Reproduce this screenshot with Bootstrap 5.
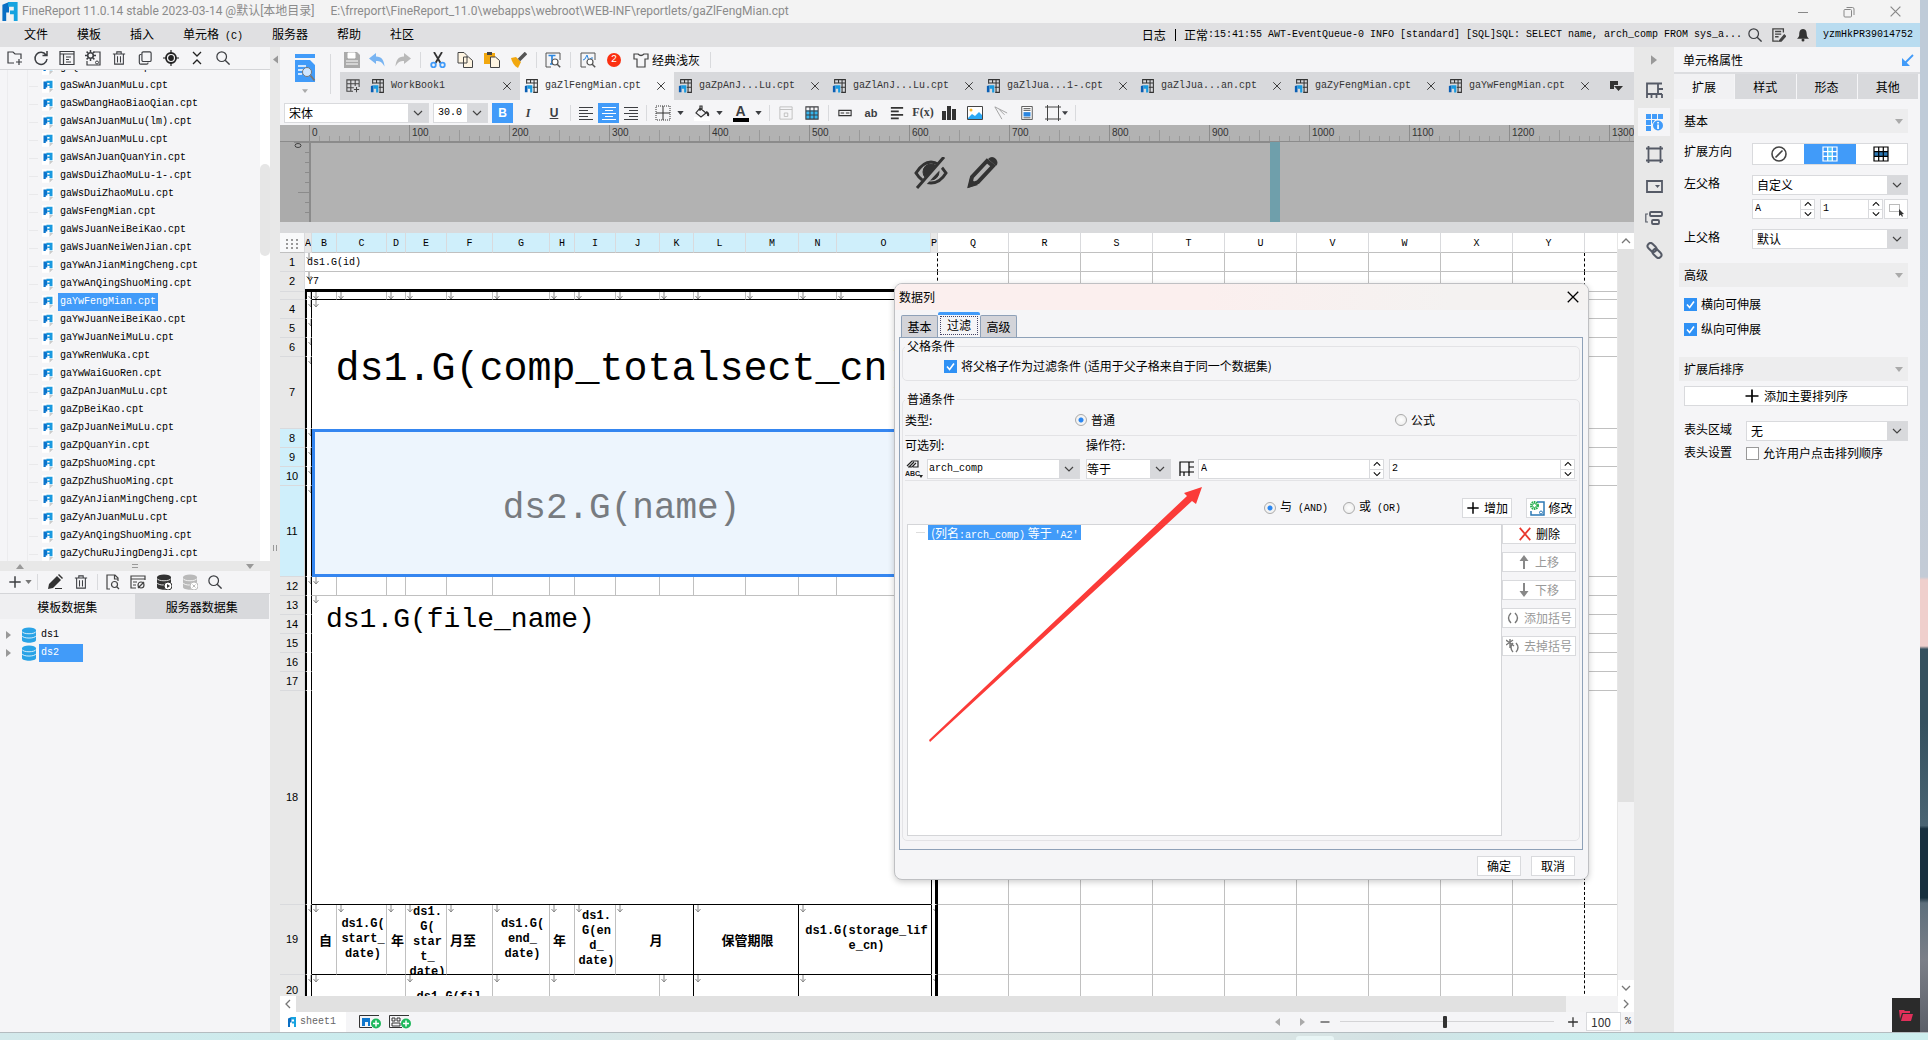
<!DOCTYPE html>
<html lang="zh-CN">
<head>
<meta charset="utf-8">
<meta name="viewport" content="width=device-width, initial-scale=1">
<title>FineReport Designer</title>
<link href="https://cdn.jsdelivr.net/npm/bootstrap@5.3.0/dist/css/bootstrap.min.css" rel="stylesheet">
<style>
:root{--blue:#419bf9;--panel:#f5f5f7;--bar:#e0e0e2;--strip:#e8e8e8;--line:#d9dadd;--tab:#d8d9dc;--mono:"Liberation Mono","Noto Sans CJK SC",monospace;
--chev:url("data:image/svg+xml,%3Csvg xmlns='http://www.w3.org/2000/svg' width='10' height='10'%3E%3Cpath d='M1 3l4 4 4-4' fill='none' stroke='%23444' stroke-width='1.2'/%3E%3C/svg%3E");
--mark:url("data:image/svg+xml,%3Csvg xmlns='http://www.w3.org/2000/svg' width='6' height='8'%3E%3Cpath d='M3 0v7M.5 4L3 7l2.5-3' fill='none' stroke='%23888'/%3E%3C/svg%3E")}
body{font:12px/18px "Noto Sans CJK SC",sans-serif;color:#000;background:var(--panel);overflow:hidden}
svg{display:block;flex:none}
use{fill:none;stroke:currentColor}
button,input,select{font:inherit;color:inherit;border-radius:0}
button{background:none;border:0;padding:0}
.lat{font:10px/18px var(--mono)}
.i16{width:16px;height:16px}.i14{width:14px;height:14px}.i18{width:18px;height:18px}
.icell{display:flex;align-items:center;justify-content:center;width:26px;height:22px;flex:none;color:#3c3e42}
.vsep{flex:none;width:1px;height:16px;margin:0 3px;background:#d9dadd}
.titlebar{height:23px;background:#f3f3f3;color:#8b8b8b;font:12px/23px Roboto,"Noto Sans CJK SC",sans-serif}
.menubar{height:24px;background:var(--bar)}
.menubar a{color:#000;text-decoration:none;margin-right:29px}
.userbox{background:#b9dcf0;padding:0 7px;height:24px;line-height:24px}
.leftpane{width:270px;background:var(--panel);flex:none}
.toolrow{height:23px;border-bottom:1px solid #d4d5d8}
.files{height:491px;overflow:hidden}
.files ul{margin-top:-11px;padding-left:42px;background:linear-gradient(#ececee,#ececee) 7px 0/1px 100% no-repeat,linear-gradient(#ececee,#ececee) 27px 0/1px 100% no-repeat}
.files li{height:18px;display:flex;align-items:center;gap:4px}
.files li::before{content:"";width:9px;height:1px;background:#e9e9eb;margin-left:-13px}
.files li a,.dsets a{color:#000;text-decoration:none;padding:0 2px}
.files .pick,.dsets .pick{background:var(--blue);color:#fff}
.fscroll{width:10px;background:#fff}.fscroll i{display:block;height:92px;margin-top:94px;border-radius:5px;background:#e6e6e6}
.hsplit{height:10px;background:var(--strip);color:#999;padding:0 15px}
.dtabs{height:25px;line-height:25px}
.dtabs button{flex:1;text-align:center;background:#efeff1}.dtabs button+button{background:var(--tab);margin-right:1px}
.vsplit{width:10px;background:var(--strip);flex:none;position:relative;color:#999}
.doctabs{height:28px;background:var(--tab)}
.doctabs .dt{flex:0 1 154px;height:28px;display:flex;align-items:center;padding:0 8px 0 4px;gap:7px;color:#333}
.doctabs .dt.on{background:var(--panel)}
.fmt{height:26px}
.combo{appearance:none;border:1px solid var(--line);height:20px;line-height:18px;padding:0 4px;background:var(--chev) right 5px center no-repeat,linear-gradient(var(--tab),var(--tab)) right 0 top 0/20px 100% no-repeat,#fff;outline:0;min-width:0}
.onb{background:var(--blue);color:#fff}
.ruler{height:17px;background:#b2b2b2;border-bottom:1px solid #8b8b8b;padding-left:29px;overflow:hidden}
.ruler span{flex:0 0 100px;height:16px;padding-left:2px;border-left:1px solid #8d8d8d;font:10px/15px "Liberation Sans",sans-serif;color:#333;background:linear-gradient(#999,#999) 49px 5px/1px 11px no-repeat,repeating-linear-gradient(90deg,transparent 0 9px,#999 9px 10px) 0 11px/100% 5px no-repeat}
.stage{height:80px;background:#b2b2b2}
.stage .tealbar{width:10px;background:#6f9fab}
.gridwrap{overflow:hidden;background:#fff;min-height:0}
.sheet{table-layout:fixed;width:100%;border-collapse:separate;border-spacing:0;line-height:14px}
.sheet td,.sheet th{padding:0;height:19px;border-right:1px solid #c0c0c0;border-bottom:1px solid #c0c0c0;overflow:hidden;vertical-align:middle;white-space:nowrap;font-weight:400;text-align:center}
.sheet thead th{height:20px;padding-top:3px;font:10px/14px var(--mono);background:#fff;border-right-color:#d9dadd}
.sheet thead .s,.sheet tbody th.s{background:#cfeffb}
.sheet tbody th,.sheet thead .g{background:var(--strip);border-color:#d9dadd}
.sheet tbody th{font:11px/14px "Liberation Sans",sans-serif}
.sheet td.m{background:var(--mark) 1px 0 no-repeat}
.sheet td.a{border-left:2px solid #000;border-right:1px solid #000;border-bottom-color:#fff}
.sheet td.p{border-left:1px solid #000;border-right:3px solid #000;border-bottom-color:#fff}
.sheet td.kb{border-bottom:1px solid #000}.sheet td.kr{border-right:1px solid #000}
.sheet td.kt{border-bottom:3px solid #000}
.sheet td.dash{border-right:1px dashed #000}
.sheet td.first{font:10px/14px var(--mono);text-align:left;padding:3px 0 0 2px}
.sheet td:last-child,.sheet th:last-child{border-right:0}
.sheet .r3 td,.sheet .r3 th{height:8px;line-height:6px}
.sheet .r7 th,.sheet .r7 td{height:72px}.sheet .r11 th,.sheet .r11 td{height:91px}.sheet .r18 th{height:214px}.sheet .r19 th{height:70px}.sheet .r20 th{height:40px}
.sheet .r19 td,.sheet .r20 td{font:bold 12px/15px var(--mono)}
.sheet .r19 td{padding-left:3px}.sheet .r19 td.a,.sheet .r19 td.p{padding-left:0}
.sheet .r19 td.zh{font:bold 13px/15px "Noto Sans CJK SC",sans-serif}
.clip{height:69px;overflow:hidden}
.sheet .big40{font:40px/44px var(--mono);padding:12px 0 0 4px}.sheet .big36{font:36px/44px var(--mono);color:#777b80;padding-top:12px}.sheet .big28{font:28px/44px var(--mono);padding:2px 0 0 14px}
.sheet td.picked{border:3px solid #3586f0;background:#edf5fd}
.vbar{width:17px;background:#f3f3f4;border-left:1px solid #e6e6e6;flex:none}
.vbar button,.hbar button{width:16px;height:16px;background:#fff;display:flex;align-items:center;justify-content:center;color:#777}
.vbar i{display:block;background:#e1e1e1;flex:0 1 553px}
.hbar{height:16px;background:#f3f3f4}.hbar i{background:#e1e1e1;height:16px;margin-right:52px}
.sheetbar{height:21px;background:var(--panel)}
.sheetbar .st{width:66px;height:20px;background:#fff;color:#666}
.zoomr{appearance:none;width:214px;height:14px;background:linear-gradient(#d4d4d6,#d4d4d6) center/100% 1px no-repeat;margin:0 9px}
.zoomr::-webkit-slider-thumb{appearance:none;width:4px;height:12px;background:#333;border-radius:1px}
.rail{width:40px;background:var(--strip);flex:none}
.rail button{width:32px;height:28px;display:flex;align-items:center;justify-content:center;color:#555a66;margin-bottom:4px}
.rail button.on{background:var(--panel);color:var(--blue)}
.props{width:246px;flex:none;background:var(--panel)}
.props .ph{height:27px;border-bottom:2px solid #dcdde0;padding:0 6px 0 9px}
.ptabs{height:25px;line-height:25px;padding-right:2px;gap:1px}.ptabs button{flex:1;background:var(--tab)}.ptabs button.on{background:#f1f1f3}
.sec{height:24px;background:#ededee;margin:0 12px 0 5px;padding:0 5px;color:#000}
.prow{display:flex;padding:0 12px 0 10px}
.prow>.lb{width:68px;flex:none;line-height:16px}
.seg{border:1px solid var(--line);height:22px;background:#fff}.seg button{flex:1;display:flex;align-items:center;justify-content:center}
.spin{display:flex;border:1px solid var(--line);background:#fff;height:20px;min-width:0}
.spin input{border:0;width:0;flex:1;padding:0 2px;font:10px/16px var(--mono);outline:0;background:#fff}
.spin span{width:14px;border-left:1px solid var(--line);display:flex;flex-direction:column;flex:none}
.spin span button{flex:1;display:flex;align-items:center;justify-content:center}.spin span button+button{border-top:1px solid var(--line)}
.tick{appearance:none;width:13px;height:13px;border:1px solid #999;background:#fff;margin:0;flex:none}
.tick:checked{border:0;background:url("data:image/svg+xml,%3Csvg xmlns='http://www.w3.org/2000/svg' width='13' height='13'%3E%3Cpath d='M3 6.5l2.6 3L10 3.5' fill='none' stroke='%23fff' stroke-width='1.6'/%3E%3C/svg%3E") center no-repeat #2f91f5}
.rad{appearance:none;width:12px;height:12px;border:1px solid #aaa;border-radius:50%;margin:0;background:radial-gradient(#fff,#e8e8e8);flex:none}
.rad:checked{background:radial-gradient(circle,#2b86f0 0 2px,#f3f3f3 3px)}
.wbtn{background:#fff;border:1px solid var(--line);height:20px;display:flex;align-items:center;justify-content:center;gap:4px;line-height:16px;white-space:nowrap}
.wbtn:disabled{color:#999}
.desk{width:8px;flex:none;background:linear-gradient(#bfcbd8 0 20%,#c3cbd6 55.9%,#efcfcc 56.2% 62.6%,#35515f 62.9% 70%,#4a6473 80%,#17303f 80.3% 87%,#5d6f7c 87.5%,#7b7f88 93%,#5b5f68)}
.taskbar{height:8px;flex:none;border-top:1px solid #b4bcc0;background:linear-gradient(90deg,#d3e9eb,#c9ecee 22%,#dbe5e5 35%,#dde6e4 62%,#d3e2e4 72%,#c9ebec 80%,#cdeeee)}
.taskbar i{display:block;width:38px;height:5px;margin-left:67.2%;margin-top:3px;background:#e8f5f5;border-radius:3px 3px 0 0}
.floatbox{position:absolute;right:8px;bottom:8px;width:28px;height:34px;background:#2b2b2b;color:#e0305a;display:flex;align-items:center;justify-content:center}
.dlg{position:absolute;left:894px;top:283px;width:695px;background:var(--panel);border:1px solid #bfc0c3;border-radius:8px;box-shadow:0 2px 6px #0003;overflow:hidden}
.dlg .dh{height:26px;background:linear-gradient(90deg,#fbefee 0 45%,#f4f2f1 80%);padding:0 8px 0 4px}
.dlgtabs{padding:3px 0 0 6px;height:27px;align-items:flex-end}
.dlgtabs button{width:37px;height:22px;line-height:22px;background:#d3d4d9;border:1px solid #8ea1b8;border-bottom:0;border-radius:2px 2px 0 0}
.dlgtabs button.on{width:42px;height:25px;line-height:16px;border:1px solid #8ea1b8;border-width:3px 0 0;border-color:var(--blue);background:var(--panel);padding:1px 2px 3px}
.dlgtabs .on span{display:block;border:1px dotted #446;height:19px}
.pane{margin:0 5px 0 4px;border:1px solid #8ea1b8;padding:0 2px 8px}
.fs{border:1px solid #e3e3e6;border-radius:5px;padding:0 2px;margin:0}
.fs legend{float:none;width:auto;font-size:12px;line-height:16px;padding:0 2px;margin:0}
.rule{border-top:1px solid #e3e3e6}
.conds{height:312px;background:#fff;border:1px solid #d4d5d8;padding:0 0 0 8px}
.conds .pick{background:var(--blue);color:#fff;padding:0 3px;height:15px;line-height:15px;margin-left:3px}
.side{width:74px}.side .wbtn{width:74px;margin-bottom:8px}
.redarrow{position:absolute;left:925px;top:484px;pointer-events:none}
</style>
<script src="https://cdn.jsdelivr.net/npm/bootstrap@5.3.0/dist/js/bootstrap.bundle.min.js"></script>
</head>
<body class="vh-100 d-flex flex-column">
<svg width="0" height="0" class="position-absolute">
<symbol id="x" viewBox="0 0 16 16"><path d="M2 2l12 12M14 2L2 14" stroke-width="1.500"/></symbol>
<symbol id="search" viewBox="0 0 16 16"><circle cx="6.500" cy="6.500" r="5.500" stroke-width="1.400"/><path d="M10.500 10.500L15.500 15.500" stroke-width="1.600"/></symbol>
<symbol id="cpt" viewBox="0 0 16 18"><path d="M0 0h16v12l-5 6H0z" fill="#fff" stroke="none"/><path d="M10 18v-5h5z" fill="#c9c9c9" stroke="none"/><path d="M2 3h5v8H5v2H2z" fill="#0a74cc" stroke="none"/><path d="M6 2h8v10h-4V9H7V7h3V5H6z" fill="#1a9ae0" stroke="none"/></symbol>
<symbol id="logo" viewBox="0 0 16 20"><path d="M0 3l7-3v11H4v9H0z" fill="#0b6fc4" stroke="none"/><path d="M6 0h10v20h-4v-7H8V9h4V5H6z" fill="#16a3e0" stroke="none"/></symbol>
<symbol id="wb" viewBox="0 0 16 16"><path d="M3 5.500V.7h12.300v14.600H10.500M3 4.500h12M7.500 1v4M11.500 1v14M10 9.500h5" stroke="#333" stroke-width="1.200"/><path d="M1 8l3-1v8H1z" fill="#0a5fb4" stroke="none"/><path d="M4 7h5.500v8.500H7V11H4z" fill="#1a9ae0" stroke="none"/></symbol>
<symbol id="db" viewBox="0 0 16 16"><path d="M1 3v10c0 3.600 14 3.600 14 0V3" fill="currentColor" stroke="none"/><ellipse cx="8" cy="3.200" rx="7" ry="2.800" fill="currentColor" stroke="none"/><path d="M1 4.500c1 3 13 3 14 0M1 8.800c1 3 13 3 14 0" stroke="#fff" stroke-width=".8"/></symbol>
<symbol id="trash" viewBox="0 0 16 16"><path d="M1 3.500h14M5.500 3V1h5v2M3 4v11h10V4M6.300 6v7M9.700 6v7" stroke-width="1.200"/></symbol>
<symbol id="copy" viewBox="0 0 16 16"><rect x="4.500" y="1" width="10.500" height="11" rx="1.500" stroke-width="1.300"/><path d="M4 4H3Q1.500 4 1.500 5.500V13Q1.500 15 3 15h7q1.500 0 1.500-2" stroke-width="1.300"/></symbol>
<symbol id="up" viewBox="0 0 10 10"><path d="M1 7l4-4 4 4" stroke-width="1.300"/></symbol>
<symbol id="dn" viewBox="0 0 10 10"><path d="M1 3l4 4 4-4" stroke-width="1.300"/></symbol>
<symbol id="lf" viewBox="0 0 10 10"><path d="M7 1L3 5l4 4" stroke-width="1.300"/></symbol>
<symbol id="rt" viewBox="0 0 10 10"><path d="M3 1l4 4-4 4" stroke-width="1.300"/></symbol>
<symbol id="tri" viewBox="0 0 8 5"><path d="M0 0h8L4 5z" fill="currentColor" stroke="none"/></symbol>
<symbol id="triu" viewBox="0 0 8 5"><path d="M0 5h8L4 0z" fill="currentColor" stroke="none"/></symbol>
<symbol id="trir" viewBox="0 0 5 8"><path d="M0 0v8l5-4z" fill="currentColor" stroke="none"/></symbol>
<symbol id="tril" viewBox="0 0 5 8"><path d="M5 0v8L0 4z" fill="currentColor" stroke="none"/></symbol>
<symbol id="plus" viewBox="0 0 16 16"><path d="M8 1.500v13M1.500 8h13" stroke-width="1.700"/></symbol>
<symbol id="minus" viewBox="0 0 16 16"><path d="M2 8h12" stroke-width="1.500"/></symbol>
<symbol id="al" viewBox="0 0 16 16"><path d="M1 2.500h14M1 5.500h9M1 8.500h14M1 11.500h9M1 14.500h14"/></symbol>
<symbol id="ac" viewBox="0 0 16 16"><path d="M1 2.500h14M4 5.500h8M1 8.500h14M4 11.500h8M1 14.500h14"/></symbol>
<symbol id="ar" viewBox="0 0 16 16"><path d="M1 2.500h14M6 5.500h9M1 8.500h14M6 11.500h9M1 14.500h14"/></symbol>
<symbol id="gear" viewBox="0 0 16 16"><path d="M9 2h6v13H2V11" stroke-width="1.200"/><circle cx="5.500" cy="5.500" r="2.800" stroke-width="1.600"/><path d="M5.500 0v2M5.500 9v2M0 5.500h2M9 5.500h2M1.600 1.600L3 3M8 8l1.400 1.400M9.400 1.600L8 3M3 8L1.600 9.400" stroke-width="1.500"/><circle cx="12" cy="12.500" r="1.500"/></symbol>
<symbol id="cells" viewBox="0 0 16 16"><path d="M1 11V1h14M1 11h14M10 1v14M10 6h5M5 11v4M1 11v4" stroke-width="1.200"/></symbol>
<symbol id="grid" viewBox="0 0 16 16"><path d="M1 1h14v14H1zM1 5.700h14M1 10.300h14M5.700 1v14M10.300 1v14" stroke-width="1.200"/></symbol>
<symbol id="mag" viewBox="0 0 16 16"><circle cx="10" cy="10" r="3" stroke="#555" fill="#fff" stroke-width="1.200"/><path d="M12.200 12.200l3 3" stroke="#555" stroke-width="1.500"/></symbol>
</svg>

<div class="d-flex flex-fill" style="min-height:0">
<div class="d-flex flex-column flex-fill" style="min-width:0">

<header class="titlebar d-flex align-items-center">
 <svg width="16" height="19" style="margin-left:2px"><use href="#logo"/></svg>
 <span class="ms-1">FineReport 11.0.14 stable 2023-03-14 @默认[本地目录]</span><span class="ms-3">E:\frreport\FineReport_11.0\webapps\webroot\WEB-INF\reportlets/gaZlFengMian.cpt</span>
 <div class="ms-auto d-flex align-items-center" style="gap:34px;padding-right:18px">
  <button aria-label="最小化"><svg width="12" height="12" viewBox="0 0 12 12" stroke="#888"><path d="M1 6.500h10"/></svg></button>
  <button aria-label="还原"><svg width="12" height="12" viewBox="0 0 12 12" fill="none" stroke="#888"><rect x="1" y="3.500" width="7.500" height="7.500" rx="1"/><path d="M3.500 1.500h6Q11 1.500 11 3v6"/></svg></button>
  <button aria-label="关闭" style="color:#888"><svg width="13" height="13"><use href="#x"/></svg></button>
 </div>
</header>

<nav class="menubar d-flex align-items-center">
 <div class="d-flex ps-4"><a href="#">文件</a><a href="#">模板</a><a href="#">插入</a><a href="#">单元格<span class="lat"> (C)</span></a><a href="#">服务器</a><a href="#">帮助</a><a href="#">社区</a></div>
 <div class="ms-auto d-flex align-items-center"><span>日志</span><span style="width:1px;height:12px;background:#000;margin:0 8px 0 9px"></span><span>正常</span><span class="lat" style="white-space:pre">:15:41:55 AWT-EventQueue-0 INFO [standard] [SQL]SQL: SELECT name, arch_comp FROM sys_a...</span>
  <button class="icell" aria-label="搜索"><svg class="i14"><use href="#search"/></svg></button>
  <button class="icell" style="width:22px" aria-label="反馈"><svg class="i14" viewBox="0 0 16 16" fill="none" stroke="#444" stroke-width="1.500"><path d="M13 5V1H1v14h6M3.500 4h7M3.500 7h7M3.500 10h4"/><path d="M8 15l6-7 1.500 1.500-5 5.500z" fill="#444"/></svg></button>
  <button class="icell" aria-label="通知"><svg width="12" height="14" viewBox="0 0 16 18" fill="#333"><path d="M8 1c4 0 5 4 5 7s1 4 3 6H0c2-2 3-3 3-6s1-7 5-7z"/><circle cx="8" cy="15.500" r="2"/></svg></button>
  <a href="#" class="userbox lat m-0">yzmHkPR39014752</a></div>
</nav>

<div class="d-flex flex-fill" style="min-height:0">

<aside class="leftpane d-flex flex-column">
 <div class="toolrow d-flex align-items-center" style="padding-left:2px">
  <button class="icell" aria-label="新建文件夹"><svg class="i16" viewBox="0 0 16 16" fill="none" stroke="currentColor" stroke-width="1.200"><path d="M7 13H1V2h5l2 2h6v5M12 9v6M9 12h6"/></svg></button>
  <button class="icell" aria-label="刷新"><svg class="i16" viewBox="0 0 16 16" fill="none" stroke="currentColor" stroke-width="1.500"><path d="M13 5A6 6 0 1 0 14 9M14 1v4.500H9.500"/></svg></button>
  <button class="icell" aria-label="定位"><svg class="i16" viewBox="0 0 16 16" fill="none" stroke="currentColor" stroke-width="1.200"><path d="M1 1.500h14v13H1zM1 4h14M4.500 4v10M7 7h5M7 9.500h3M7 12h5"/></svg></button>
  <button class="icell" aria-label="设置"><svg class="i16"><use href="#gear"/></svg></button>
  <button class="icell" aria-label="删除"><svg class="i14"><use href="#trash"/></svg></button>
  <button class="icell" aria-label="复制"><svg class="i14"><use href="#copy"/></svg></button>
  <button class="icell" aria-label="目标"><svg class="i16" viewBox="0 0 16 16" fill="none" stroke="#222" stroke-width="1.800"><circle cx="8" cy="8" r="5"/><circle cx="8" cy="8" r="2" fill="#222"/><path d="M8 0v3M8 13v3M0 8h3M13 8h3" stroke-width="1.200"/></svg></button>
  <button class="icell" aria-label="折叠"><svg width="12" height="14" viewBox="0 0 12 14" fill="none" stroke="#222" stroke-width="1.300"><path d="M2 1l4 4 4-4M2 13l4-4 4 4"/></svg></button>
  <button class="icell" aria-label="查找"><svg class="i14"><use href="#search"/></svg></button>
 </div>
 <div class="files d-flex"><ul class="list-unstyled flex-fill lat mb-0">
 <li><svg width="12" height="14"><use href="#cpt"/></svg><a href="#">gaQtJuanMuLu.cpt</a></li>
 <li><svg width="12" height="14"><use href="#cpt"/></svg><a href="#">gaSwAnJuanMuLu.cpt</a></li>
 <li><svg width="12" height="14"><use href="#cpt"/></svg><a href="#">gaSwDangHaoBiaoQian.cpt</a></li>
 <li><svg width="12" height="14"><use href="#cpt"/></svg><a href="#">gaWsAnJuanMuLu(lm).cpt</a></li>
 <li><svg width="12" height="14"><use href="#cpt"/></svg><a href="#">gaWsAnJuanMuLu.cpt</a></li>
 <li><svg width="12" height="14"><use href="#cpt"/></svg><a href="#">gaWsAnJuanQuanYin.cpt</a></li>
 <li><svg width="12" height="14"><use href="#cpt"/></svg><a href="#">gaWsDuiZhaoMuLu-1-.cpt</a></li>
 <li><svg width="12" height="14"><use href="#cpt"/></svg><a href="#">gaWsDuiZhaoMuLu.cpt</a></li>
 <li><svg width="12" height="14"><use href="#cpt"/></svg><a href="#">gaWsFengMian.cpt</a></li>
 <li><svg width="12" height="14"><use href="#cpt"/></svg><a href="#">gaWsJuanNeiBeiKao.cpt</a></li>
 <li><svg width="12" height="14"><use href="#cpt"/></svg><a href="#">gaWsJuanNeiWenJian.cpt</a></li>
 <li><svg width="12" height="14"><use href="#cpt"/></svg><a href="#">gaYwAnJianMingCheng.cpt</a></li>
 <li><svg width="12" height="14"><use href="#cpt"/></svg><a href="#">gaYwAnQingShuoMing.cpt</a></li>
 <li><svg width="12" height="14"><use href="#cpt"/></svg><a href="#" class="pick">gaYwFengMian.cpt</a></li>
 <li><svg width="12" height="14"><use href="#cpt"/></svg><a href="#">gaYwJuanNeiBeiKao.cpt</a></li>
 <li><svg width="12" height="14"><use href="#cpt"/></svg><a href="#">gaYwJuanNeiMuLu.cpt</a></li>
 <li><svg width="12" height="14"><use href="#cpt"/></svg><a href="#">gaYwRenWuKa.cpt</a></li>
 <li><svg width="12" height="14"><use href="#cpt"/></svg><a href="#">gaYwWaiGuoRen.cpt</a></li>
 <li><svg width="12" height="14"><use href="#cpt"/></svg><a href="#">gaZpAnJuanMuLu.cpt</a></li>
 <li><svg width="12" height="14"><use href="#cpt"/></svg><a href="#">gaZpBeiKao.cpt</a></li>
 <li><svg width="12" height="14"><use href="#cpt"/></svg><a href="#">gaZpJuanNeiMuLu.cpt</a></li>
 <li><svg width="12" height="14"><use href="#cpt"/></svg><a href="#">gaZpQuanYin.cpt</a></li>
 <li><svg width="12" height="14"><use href="#cpt"/></svg><a href="#">gaZpShuoMing.cpt</a></li>
 <li><svg width="12" height="14"><use href="#cpt"/></svg><a href="#">gaZpZhuShuoMing.cpt</a></li>
 <li><svg width="12" height="14"><use href="#cpt"/></svg><a href="#">gaZyAnJianMingCheng.cpt</a></li>
 <li><svg width="12" height="14"><use href="#cpt"/></svg><a href="#">gaZyAnJuanMuLu.cpt</a></li>
 <li><svg width="12" height="14"><use href="#cpt"/></svg><a href="#">gaZyAnQingShuoMing.cpt</a></li>
 <li><svg width="12" height="14"><use href="#cpt"/></svg><a href="#">gaZyChuRuJingDengJi.cpt</a></li>
 </ul><div class="fscroll"><i></i></div></div>
 <div class="hsplit d-flex align-items-center justify-content-between"><svg width="10" height="5"><use href="#triu"/></svg><svg width="6" height="4" stroke="#999"><path d="M0 .5h6M0 3.500h6"/></svg><svg width="10" height="5"><use href="#tri"/></svg></div>
 <div class="toolrow d-flex align-items-center" style="padding-left:7px">
  <button class="icell" style="gap:3px" aria-label="新增"><svg class="i14"><use href="#plus"/></svg><svg width="7" height="4" style="color:#777"><use href="#tri"/></svg></button><span class="vsep mx-1"></span>
  <button class="icell" aria-label="编辑"><svg class="i16" viewBox="0 0 16 16" fill="#333"><path d="M1 15l1-5 8-8 4 4-8 8zM11 1l1-1 4 4-1 1zM8 14h7v1H8z"/></svg></button>
  <button class="icell" aria-label="删除"><svg class="i14"><use href="#trash"/></svg></button><span class="vsep"></span>
  <button class="icell" aria-label="预览" style="width:24px"><svg class="i16" viewBox="0 0 16 16" fill="none" stroke="#444" stroke-width="1.200"><path d="M5 15H2V1h8l3 3v3M9.500 1v4H13"/><circle cx="9.500" cy="10.500" r="3"/><path d="M12 13l2 2"/></svg></button>
  <button class="icell" aria-label="连接"><svg class="i16" viewBox="0 0 16 16" fill="none" stroke="#444" stroke-width="1.200"><path d="M6 14H1V2h14v4M1 5h14M3 8h4M3 11h3"/><circle cx="11" cy="11" r="3"/><path d="M8 14l6-6"/></svg></button>
  <button class="icell" aria-label="数据源" style="color:#333"><svg class="i16" viewBox="0 0 16 16"><use href="#db"/><circle cx="12" cy="12" r="4" fill="#fff" stroke="#333"/><path d="M11 10v4l3-2z" fill="#333"/></svg></button>
  <button class="icell" aria-label="停用" style="color:#b9b9b9"><svg class="i16" viewBox="0 0 16 16"><use href="#db"/><circle cx="12" cy="12" r="4" fill="#fff" stroke="#bbb"/><path d="M10.500 10.500l3 3M13.500 10.500l-3 3" stroke="#bbb"/></svg></button>
  <button class="icell" aria-label="查找" style="width:24px"><svg class="i14"><use href="#search"/></svg></button>
 </div>
 <div class="dtabs d-flex"><button>模板数据集</button><button>服务器数据集</button></div>
 <ul class="dsets list-unstyled lat mb-0" style="padding:7px 0 0 6px">
  <li class="d-flex align-items-center"><svg width="5" height="8" style="color:#999;margin-right:10px"><use href="#trir"/></svg><svg class="i16" style="color:#2aa3e6;margin-right:2px"><use href="#db"/></svg><a href="#">ds1</a></li>
  <li class="d-flex align-items-center"><svg width="5" height="8" style="color:#999;margin-right:10px"><use href="#trir"/></svg><svg class="i16" style="color:#2aa3e6;margin-right:2px"><use href="#db"/></svg><a href="#" class="pick pe-4">ds2</a></li>
 </ul>
</aside>

<div class="vsplit d-flex flex-column align-items-center justify-content-between"><svg width="5" height="9" style="margin-top:8px"><use href="#tril"/></svg><svg width="4" height="6" stroke="#999"><path d="M.5 0v6M3.500 0v6"/></svg><span></span></div>

<main class="d-flex flex-column flex-fill" style="min-width:0">
 <div class="d-flex">
  <div class="d-flex align-items-center" style="width:60px;padding-left:14px">
   <button class="d-flex flex-column align-items-center" aria-label="预览模板" style="gap:7px"><svg width="22" height="28" viewBox="0 0 22 28"><path d="M1 0h20v4H1zM1 6h15l5 5v17H1z" fill="#419bf9"/><path d="M4 12h8M4 16h5M4 20h4" stroke="#fff" stroke-width="1.500"/><circle cx="13" cy="18" r="4.500" fill="#cfe6ff" stroke="#777"/><path d="M16.500 21.500l4 5" stroke="#777" stroke-width="2"/></svg><svg width="6" height="4" style="color:#aaa"><use href="#tri"/></svg></button>
   <span style="width:1px;height:40px;background:#d9dadd;margin-left:14px"></span>
  </div>
  <div class="flex-fill" style="min-width:0">
   <div class="d-flex align-items-center" style="height:25px">
    <button class="icell" style="width:24px" aria-label="保存"><svg class="i16" viewBox="0 0 16 16"><path d="M0 0h13l3 3v13H0z" fill="#aaa"/><path d="M4 1h7v5H4zM2 9h12M2 12h12" fill="#fff" stroke="#fff"/></svg></button>
    <button class="icell" aria-label="撤销"><svg class="i16" viewBox="0 0 16 16"><path d="M0 6.500L7 1v3.500c6 0 8 4 8.500 10C13 10 11 9 7 9v3z" fill="#78b4f2"/></svg></button>
    <button class="icell" aria-label="重做"><svg class="i16" viewBox="0 0 16 16"><path d="M16 6.500L9 1v3.500c-6 0-8 4-8.500 10C3 10 5 9 9 9v3z" fill="#b9b9b9"/></svg></button><span class="vsep mx-1"></span>
    <button class="icell" aria-label="剪切"><svg class="i16" viewBox="0 0 16 16" fill="none" stroke-width="1.800"><path d="M4 0l6.500 11M12 0L5.500 11" stroke="#333"/><circle cx="3.500" cy="13" r="2.300" stroke="#419bf9"/><circle cx="12.500" cy="13" r="2.300" stroke="#419bf9"/></svg></button>
    <button class="icell" style="width:28px" aria-label="复制"><svg class="i16" viewBox="0 0 16 16" fill="#fff5e2" stroke="#444"><path d="M1 .5h6l3 3V11H1zM6.500 5h5l4 3.500v7h-9z"/></svg></button>
    <button class="icell" aria-label="粘贴"><svg class="i16" viewBox="0 0 16 16"><path d="M0 1h11v11H0z" fill="#f2a80f"/><path d="M3 0h5v3H3z" fill="#444"/><path d="M6.500 5h5l4 3.500v7h-9z" fill="#fff5e2" stroke="#444"/></svg></button>
    <button class="icell" style="width:28px" aria-label="格式刷"><svg class="i16" viewBox="0 0 16 16"><path d="M0 6l5-1 5 5-3 6C3 14 1 10 0 6z" fill="#f2a80f"/><path d="M8 8l7-7" stroke="#555" stroke-width="3.500"/></svg></button><span class="vsep"></span>
    <button class="icell" aria-label="文本"><svg class="i16" viewBox="0 0 16 16"><path d="M6 15H1V1h14v7" fill="none" stroke="#555"/><path d="M3.500 3.500h7M7 3.500v9M5 12h4" stroke="#2b86e0" stroke-width="1.700"/><use href="#mag"/></svg></button><span class="vsep mx-1"></span>
    <button class="icell" aria-label="监控"><svg class="i16" viewBox="0 0 16 16"><path d="M6 15H1V1h14v7" fill="none" stroke="#555"/><path d="M3 8l2-1 2-4 2 6 2-3h2" fill="none" stroke="#2b86e0"/><use href="#mag"/></svg></button>
    <span class="icell"><b class="rounded-circle text-white text-center lat" style="width:14px;height:14px;line-height:14px;background:#fb3011">2</b></span>
    <button class="d-flex align-items-center" style="gap:3px;margin-left:6px"><svg class="i16" viewBox="0 0 16 16" fill="none" stroke="#444" stroke-width="1.200"><path d="M1 2h4q3 3 6 0h4v5h-3v8H4V7H1z"/></svg>经典浅灰</button><span class="vsep" style="margin-left:10px"></span>
   </div>
   <div class="doctabs d-flex align-items-center lat">
    <button class="icell" aria-label="新建模板"><svg class="i14" viewBox="0 0 16 16" fill="none" stroke="#444" stroke-width="1.200"><path d="M8 14H1V1h14v8M1 5.500h14M1 10h8M5.500 1v13M10.500 1v7M12 9v6M9 12h6"/></svg></button>
    <div class="dt"><svg class="i14"><use href="#wb"/></svg><span>WorkBook1</span><button class="ms-auto" aria-label="关闭"><svg width="10" height="10"><use href="#x"/></svg></button></div>
    <div class="dt on"><svg class="i14"><use href="#wb"/></svg><span>gaZlFengMian.cpt</span><button class="ms-auto" aria-label="关闭"><svg width="10" height="10"><use href="#x"/></svg></button></div>
    <div class="dt"><svg class="i14"><use href="#wb"/></svg><span>gaZpAnJ...Lu.cpt</span><button class="ms-auto" aria-label="关闭"><svg width="10" height="10"><use href="#x"/></svg></button></div>
    <div class="dt"><svg class="i14"><use href="#wb"/></svg><span>gaZlAnJ...Lu.cpt</span><button class="ms-auto" aria-label="关闭"><svg width="10" height="10"><use href="#x"/></svg></button></div>
    <div class="dt"><svg class="i14"><use href="#wb"/></svg><span>gaZlJua...1-.cpt</span><button class="ms-auto" aria-label="关闭"><svg width="10" height="10"><use href="#x"/></svg></button></div>
    <div class="dt"><svg class="i14"><use href="#wb"/></svg><span>gaZlJua...an.cpt</span><button class="ms-auto" aria-label="关闭"><svg width="10" height="10"><use href="#x"/></svg></button></div>
    <div class="dt"><svg class="i14"><use href="#wb"/></svg><span>gaZyFengMian.cpt</span><button class="ms-auto" aria-label="关闭"><svg width="10" height="10"><use href="#x"/></svg></button></div>
    <div class="dt"><svg class="i14"><use href="#wb"/></svg><span>gaYwFengMian.cpt</span><button class="ms-auto" aria-label="关闭"><svg width="10" height="10"><use href="#x"/></svg></button></div>
    <button class="icell mx-auto" aria-label="更多"><svg width="14" height="12" viewBox="0 0 14 12" fill="#333"><path d="M1 1h8v4H5v4H1zM5 6h9l-4.500 5z"/></svg></button>
   </div>
  </div>
 </div>
 <div class="fmt d-flex align-items-center" style="padding-left:4px">
  <select class="combo" style="width:145px" aria-label="字体"><option>宋体</option></select>
  <select class="combo lat ms-1" style="width:55px" aria-label="字号"><option>30.0</option></select>
  <button class="icell onb ms-1" style="width:21px;height:20px" aria-label="加粗"><b style="font-family:'Liberation Sans'">B</b></button>
  <button class="icell" style="margin-left:2px" aria-label="斜体"><b class="fst-italic" style="font-family:'Liberation Serif'">I</b></button>
  <button class="icell" aria-label="下划线"><b class="text-decoration-underline" style="font-family:'Liberation Sans'">U</b></button><span class="vsep"></span>
  <button class="icell" style="width:24px" aria-label="左对齐"><svg class="i16"><use href="#al"/></svg></button>
  <button class="icell onb" style="width:21px;height:20px" aria-label="居中"><svg class="i16"><use href="#ac"/></svg></button>
  <button class="icell" style="width:24px" aria-label="右对齐"><svg class="i16"><use href="#ar"/></svg></button><span class="vsep"></span>
  <button class="icell" style="width:38px;gap:6px" aria-label="边框"><svg class="i16" viewBox="0 0 16 16" fill="none" stroke="#333"><path d="M1 1h14v14H1z" stroke-dasharray="1 1"/><path d="M8 1v14M1 8h14"/></svg><svg width="7" height="4"><use href="#tri"/></svg></button>
  <button class="icell" style="width:40px;gap:6px" aria-label="填充"><svg class="i16" viewBox="0 0 16 16" fill="none" stroke="#333" stroke-width="1.200"><path d="M0 12h16v4H0z" fill="#fff" stroke="none"/><path d="M6 3l6 5-5 4-5-4zM6 6V1h2v4"/><path d="M12 7q3 1 2 4" stroke-width="2"/></svg><svg width="7" height="4"><use href="#tri"/></svg></button>
  <button class="icell" style="width:38px;gap:6px" aria-label="字色"><b class="text-center" style="width:16px;height:18px;line-height:15px;font-size:14px;font-family:'Liberation Sans';border-bottom:4px solid #000">A</b><svg width="7" height="4"><use href="#tri"/></svg></button><span class="vsep"></span>
  <button class="icell" aria-label="单元格"><svg class="i14" viewBox="0 0 16 16" fill="none" stroke="#bbb"><path d="M1 1h14v14H1zM1 4h14M6 8h4v4H6z"/></svg></button>
  <button class="icell" aria-label="表格"><svg class="i14" viewBox="0 0 16 16"><path d="M1 5h14v10H1z" fill="#35b5ec"/><use href="#grid"/></svg></button><span class="vsep"></span>
  <button class="icell" aria-label="控件"><svg class="i14" viewBox="0 0 16 16" fill="none" stroke="#333" stroke-width="1.300"><path d="M1 5h14v6H1zM3 8h4M9 8h4"/></svg></button>
  <button class="icell" aria-label="文字"><b style="font:bold 11px 'Liberation Sans'">ab</b></button>
  <button class="icell" aria-label="段落"><svg class="i14" viewBox="0 0 16 16" stroke="#333" stroke-width="2"><path d="M1 2h14M1 6h9M1 10h14M1 14h9"/></svg></button>
  <button class="icell" aria-label="公式"><b style="font:bold 12px 'Liberation Serif'">F(x)</b></button>
  <button class="icell" aria-label="图表"><svg class="i14" viewBox="0 0 14 14" fill="#333"><path d="M0 5h4v9H0zM5 0h4v14H5zM10 3h4v11h-4z"/></svg></button>
  <button class="icell" aria-label="图片"><svg width="16" height="14" viewBox="0 0 16 14"><path d="M.5.5h15v13H.5z" fill="#fff" stroke="#444"/><circle cx="4" cy="4" r="1.500" fill="#f5b52a"/><path d="M1 12l4-4 3 2 4-4 3 3v4H1z" fill="#2aa8f5"/></svg></button>
  <button class="icell" aria-label="斜线"><svg class="i14" viewBox="0 0 16 16" stroke="#999" fill="none"><path d="M1 1l14 7M1 1l8 14M6 4l6 6"/></svg></button>
  <button class="icell" aria-label="报告块"><svg class="i14" viewBox="0 0 16 16" fill="#fff" stroke="#444"><path d="M2 .5h12v15H2zM4 3h8M4 5h8M4 13.500h8"/><path d="M4 7h8v5H4z" fill="#2b86e0" stroke="none"/></svg></button>
  <button class="icell" style="width:32px;gap:1px" aria-label="形状"><svg class="i16" viewBox="0 0 16 16" fill="none" stroke="#444"><path d="M2.500 0v16M13.500 0v16M0 2h16M0 14h16"/></svg><svg width="6" height="4"><use href="#tri"/></svg></button><span class="vsep"></span>
 </div>
 <div class="ruler d-flex"><span>0</span><span>100</span><span>200</span><span>300</span><span>400</span><span>500</span><span>600</span><span>700</span><span>800</span><span>900</span><span>1000</span><span>1100</span><span>1200</span><span>1300</span></div>
 <div class="stage d-flex">
  <svg width="31" height="80"><path d="M0 0h31v80H0z" fill="#ababab"/><path d="M14 .5h17M25 10.500h4M25 20.500h4M25 30.500h4M25 40.500h4M18 50.500h11M25 60.500h4M25 70.500h4" stroke="#8b8b8b"/><path d="M30 0v80" stroke="#8b8b8b" stroke-width="2"/><ellipse cx="18" cy="3.500" rx="2" ry="3" fill="none" stroke="#444" transform="rotate(90 18 3.500)"/></svg>
  <div class="d-flex justify-content-center" style="flex:0 0 959px;gap:18px;padding:14px 0 0 330px;border-top:1px solid #8b8b8b">
   <button class="align-self-start" aria-label="隐藏"><svg width="34" height="32" viewBox="0 0 34 32" fill="none" stroke="#333"><path d="M2 16Q9 5 17 5t15 11q-6 10-15 10T2 16z" stroke-width="3"/><circle cx="17" cy="15" r="8" fill="#333"/><path d="M33 1L5 31" stroke="#b2b2b2" stroke-width="6"/><path d="M30 0L3 31" stroke-width="3"/></svg></button>
   <button class="align-self-start" aria-label="编辑"><svg width="32" height="32" viewBox="0 0 32 32" fill="none" stroke="#333"><path d="M4 28l2-8L21 4l6 5-15 16z" stroke-width="4"/><path d="M2 31l2-10 8 7zM22 2q4-4 8 0 3 4 0 7z" fill="#333" stroke="none"/></svg></button>
  </div>
  <div class="tealbar"></div>
 </div>
 <div style="height:11px;background:#d9dadc;flex:none"></div>

 <div class="d-flex flex-fill" style="min-height:0">
 <div class="gridwrap flex-fill">
 <table class="sheet">
 <colgroup><col style="width:25px"><col style="width:7px"><col style="width:25px"><col style="width:50px"><col style="width:19px"><col style="width:41px"><col style="width:46px"><col style="width:57px"><col style="width:25px"><col style="width:41px"><col style="width:44px"><col style="width:34px"><col style="width:52px"><col style="width:53px"><col style="width:38px"><col style="width:94px"><col style="width:7px"><col style="width:71px"><col span="8" style="width:72px"><col></colgroup>
 <thead><tr><th class="bg-light" aria-label="全选"><svg class="mx-auto" width="12" height="10" viewBox="0 0 12 10" stroke="#999" stroke-width="2" stroke-dasharray="2 3"><path d="M0 1h12M0 5h12M0 9h12"/></svg></th><th class="g">A<th class="s">B<th class="s">C<th class="s">D<th class="s">E<th class="s">F<th class="s">G<th class="s">H<th class="s">I<th class="s">J<th class="s">K<th class="s">L<th class="s">M<th class="s">N<th class="s">O<th class="g">P<th>Q<th>R<th>S<th>T<th>U<th>V<th>W<th>X<th>Y<th></tr></thead>
 <tbody>
 <tr><th>1<td colspan="16" class="m dash first">ds1.G(id)<td><td><td><td><td><td><td><td><td class="dash"><td></tr>
 <tr><th>2<td colspan="16" class="m kt dash first">Y7<td><td><td><td><td><td><td><td><td class="dash"><td></tr>
 <tr class="r3"><th><td class="a m"><td class="m kb"><td class="m kb"><td class="m kb"><td class="m kb"><td class="m kb"><td class="m kb"><td class="m kb"><td class="m kb"><td class="m kb"><td class="m kb"><td class="m kb"><td class="m kb"><td class="m kb"><td class="m kb"><td class="p"><td><td><td><td><td><td><td><td><td class="dash"><td></tr>
 <tr><th>4<td class="a m"><td class="m big40" colspan="14" rowspan="4" style="border-width:0">ds1.G(comp_totalsect_cn)<td class="p"><td><td><td><td><td><td><td><td><td class="dash"><td></tr>
 <tr><th>5<td class="a m"><td class="p"><td><td><td><td><td><td><td><td><td class="dash"><td></tr>
 <tr><th>6<td class="a m"><td class="p"><td><td><td><td><td><td><td><td><td class="dash"><td></tr>
 <tr class="r7"><th>7<td class="a m"><td class="p"><td><td><td><td><td><td><td><td><td class="dash"><td></tr>
 <tr><th class="s">8<td class="a m"><td class="picked big36" colspan="14" rowspan="4">ds2.G(name)<td class="p"><td><td><td><td><td><td><td><td><td class="dash"><td></tr>
 <tr><th class="s">9<td class="a m"><td class="p"><td><td><td><td><td><td><td><td><td class="dash"><td></tr>
 <tr><th class="s">10<td class="a m"><td class="p"><td><td><td><td><td><td><td><td><td class="dash"><td></tr>
 <tr class="r11"><th class="s">11<td class="a m"><td class="p"><td><td><td><td><td><td><td><td><td class="dash"><td></tr>
 <tr><th>12<td class="a m"><td class="m"><td><td><td><td><td><td><td><td><td><td><td><td><td><td class="p"><td><td><td><td><td><td><td><td><td class="dash"><td></tr>
 <tr><th>13<td class="a"><td class="m kb big28 text-start align-top" colspan="14" rowspan="6" style="border-right-width:0">ds1.G(file_name)<td class="p"><td><td><td><td><td><td><td><td><td class="dash"><td></tr>
 <tr><th>14<td class="a"><td class="p"><td><td><td><td><td><td><td><td><td class="dash"><td></tr>
 <tr><th>15<td class="a"><td class="p"><td><td><td><td><td><td><td><td><td class="dash"><td></tr>
 <tr><th>16<td class="a"><td class="p"><td><td><td><td><td><td><td><td><td class="dash"><td></tr>
 <tr><th>17<td class="a"><td class="p"><td><td><td><td><td><td><td><td><td class="dash"><td></tr>
 <tr class="r18"><th>18<td class="a"><td class="p"><td><td><td><td><td><td><td><td><td class="dash"><td></tr>
 <tr class="r19"><th>19<td class="a m"><td class="m kb zh">自<td class="m kb">ds1.G(<br>start_<br>date)<td class="m kb zh">年<td class="m kb align-top"><div class="clip">ds1.<br>G(<br>star<br>t_<br>date)</div><td class="m kb zh text-start">月至<td class="m kb">ds1.G(<br>end_<br>date)<td class="m kb zh text-start">年<td class="m kb">ds1.<br>G(en<br>d_<br>date)<td class="m kb kr zh" colspan="2">月<td class="m kb kr zh" colspan="2">保管期限<td class="m kb" colspan="2" style="border-right-width:0">ds1.G(storage_lif<br>e_cn)<td class="p m"><td><td><td><td><td><td><td><td><td class="dash"><td></tr>
 <tr class="r20"><th class="align-top" style="padding-top:8px">20<td class="a m"><td class="m" colspan="3"><td class="m align-top" colspan="2" style="padding-top:15px">ds1.G(fil<td class="m"><td class="m" colspan="3"><td class="m kr"><td class="m kr" colspan="2"><td class="m" colspan="2" style="border-right-width:0"><td class="p m"><td><td><td><td><td><td><td><td><td class="dash"><td></tr>
 </tbody></table>
 </div>
 <div class="vbar d-flex flex-column"><button aria-label="上"><svg width="10" height="10"><use href="#up"/></svg></button><i></i><button class="mt-auto" aria-label="下"><svg width="10" height="10"><use href="#dn"/></svg></button></div>
 </div>
 <div class="hbar d-flex"><button aria-label="左"><svg width="10" height="10"><use href="#lf"/></svg></button><i class="flex-fill"></i><button aria-label="右"><svg width="10" height="10"><use href="#rt"/></svg></button></div>
 <div class="sheetbar d-flex align-items-center">
  <button class="st lat d-flex align-items-center ps-2 align-self-start" style="gap:4px"><svg width="8" height="10"><use href="#logo"/></svg>sheet1</button>
  <button style="margin-left:13px" aria-label="新增报表"><svg width="22" height="14" viewBox="0 0 22 14"><path d="M.5.500H20M.5.500v12H13" stroke="#333" fill="none"/><path d="M3 3h3v8H3zM6 3h5v8H9V7H6z" fill="#1177cc"/><circle cx="17" cy="8.500" r="5" fill="#1fb85c"/><path d="M14 8.500h6M17 5.500v6" stroke="#fff" stroke-width="1.500"/></svg></button>
  <button class="ms-2" aria-label="新增表单"><svg width="22" height="14" viewBox="0 0 22 14"><path d="M.5.500H20M.5.500v12H13M3 3h3v3H3zM8 3h3v3H8zM3 8h8v3H3z" stroke="#333" fill="none"/><circle cx="17" cy="8.500" r="5" fill="#1fb85c"/><path d="M14 8.500h6M17 5.500v6" stroke="#fff" stroke-width="1.500"/></svg></button>
  <div class="ms-auto d-flex align-items-center" style="padding-right:3px;color:#333">
   <svg width="5" height="8" style="color:#aaa;margin-right:20px"><use href="#tril"/></svg><svg width="5" height="8" style="color:#aaa;margin-right:14px"><use href="#trir"/></svg>
   <button aria-label="缩小"><svg width="12" height="12"><use href="#minus"/></svg></button><input class="zoomr" type="range" value="49" aria-label="缩放"><button class="ms-1" aria-label="放大"><svg width="12" height="12"><use href="#plus"/></svg></button>
   <input style="width:35px;height:19px;border:1px solid #d9dadd;padding:0 4px;margin-left:7px" value="100" aria-label="缩放比例"><b class="lat ms-1">%</b></div>
 </div>
</main>

<div class="rail d-flex flex-column align-items-center">
 <button aria-label="收起" style="height:25px;color:#999"><svg width="6" height="10"><use href="#trir"/></svg></button>
 <button aria-label="单元格元素"><svg width="17" height="17" viewBox="0 0 17 17" fill="none" stroke="currentColor" stroke-width="1.800"><path d="M1 16V1.500h15M1 12h15M12 1v11M12 7h5M5.500 12v4M10.500 12v4M16 12v4"/></svg></button>
 <button class="on" aria-label="单元格属性"><svg width="17" height="17" viewBox="0 0 17 17" fill="currentColor"><path d="M0 0h5v5H0zM6 0h5v5H6zM12 0h5v5h-5zM0 6h5v5H0zM0 12h5v5H0zM6 6h3L6 10z"/><circle cx="12" cy="11.500" r="5"/><path d="M11.200 8h1.700v1.500h-1.700zM11.200 10.500h1.700V15h-1.700z" fill="#fff"/></svg></button>
 <button aria-label="悬浮元素"><svg width="17" height="17" viewBox="0 0 17 17" fill="none" stroke="currentColor" stroke-width="1.800"><path d="M2.500 0v17M14.500 0v17M0 2.500h17M0 14.500h17"/></svg></button>
 <button aria-label="控件设置"><svg width="17" height="13" viewBox="0 0 17 13" fill="none" stroke="currentColor" stroke-width="1.800"><path d="M1 1h15v11H1z"/><path d="M9 5h5l-2.500 3z" fill="currentColor" stroke="none"/></svg></button>
 <button aria-label="条件属性"><svg width="18" height="14" viewBox="0 0 18 14" fill="none" stroke="currentColor" stroke-width="1.800"><rect x="5" y="1" width="12" height="4" rx="1"/><rect x="7" y="9" width="7" height="4" rx="1"/><path d="M3 3H.8v8H3" stroke-width="1.200"/></svg></button>
 <button aria-label="超级链接"><svg width="17" height="17" viewBox="0 0 17 17" fill="none" stroke="currentColor" stroke-width="2"><rect x="1" y="2.500" width="10" height="6" rx="3" transform="rotate(45 6 5.500)"/><rect x="6" y="8.500" width="10" height="6" rx="3" transform="rotate(45 11 11.500)"/></svg></button>
</div>

<aside class="props">
 <div class="ph d-flex align-items-center justify-content-between">单元格属性<button aria-label="弹出"><svg width="12" height="12" viewBox="0 0 12 12" stroke="#419bf9" fill="none" stroke-width="1.800"><path d="M11 1L2 10"/><path d="M0 4v8h8z" fill="#419bf9" stroke="none"/></svg></button></div>
 <div class="ptabs d-flex"><button class="on">扩展</button><button>样式</button><button>形态</button><button>其他</button></div>
 <div class="sec d-flex align-items-center justify-content-between" style="margin-top:10px">基本<svg width="8" height="5" style="color:#aaa"><use href="#tri"/></svg></div>
 <div class="prow" style="padding-top:10px"><span class="lb">扩展方向</span><div class="seg d-flex flex-fill">
  <button aria-label="不扩展"><svg class="i16" viewBox="0 0 16 16" fill="none" stroke="#444" stroke-width="1.600"><circle cx="8" cy="8" r="7"/><path d="M4.500 11.500l7-7"/></svg></button>
  <button class="onb" aria-label="纵向"><svg class="i16" viewBox="0 0 16 16"><path d="M5.500 1h5v14h-5z" fill="#55c8f5"/><use href="#grid"/></svg></button>
  <button aria-label="横向"><svg class="i16" viewBox="0 0 16 16"><path d="M1 5.500h14v5H1z" fill="#2b78b5"/><use href="#grid"/></svg></button></div></div>
 <div class="prow" style="padding-top:10px"><label class="lb" for="lp">左父格</label><select id="lp" class="combo flex-fill"><option>自定义</option></select></div>
 <div class="prow" style="padding-top:4px"><span class="lb"></span>
  <div class="spin" style="width:63px;margin-right:5px"><input value="A" aria-label="列"><span><button aria-label="增"><svg width="8" height="8"><use href="#up"/></svg></button><button aria-label="减"><svg width="8" height="8"><use href="#dn"/></svg></button></span></div>
  <div class="spin" style="width:63px;margin-right:1px"><input value="1" aria-label="行"><span><button aria-label="增"><svg width="8" height="8"><use href="#up"/></svg></button><button aria-label="减"><svg width="8" height="8"><use href="#dn"/></svg></button></span></div>
  <button class="wbtn flex-fill" aria-label="选取"><svg width="15" height="15" viewBox="0 0 15 15"><path d="M.5 2.500h10v7H.5z" fill="none" stroke="#777" stroke-dasharray="1 1"/><path d="M10 7l5 5-2 .3 1 2-1 .5-1.200-2L10 14z" fill="#333"/></svg></button></div>
 <div class="prow" style="padding-top:10px"><label class="lb" for="tp">上父格</label><select id="tp" class="combo flex-fill"><option>默认</option></select></div>
 <div class="sec d-flex align-items-center justify-content-between" style="margin-top:14px">高级<svg width="8" height="5" style="color:#aaa"><use href="#tri"/></svg></div>
 <label class="prow align-items-center" style="margin-top:8px;gap:4px"><input class="tick" type="checkbox" checked>横向可伸展</label>
 <label class="prow align-items-center" style="margin-top:7px;gap:4px"><input class="tick" type="checkbox" checked>纵向可伸展</label>
 <div class="sec d-flex align-items-center justify-content-between" style="margin-top:19px">扩展后排序<svg width="8" height="5" style="color:#aaa"><use href="#tri"/></svg></div>
 <div class="prow" style="margin-top:5px"><button class="wbtn flex-fill"><svg class="i16"><use href="#plus"/></svg>添加主要排列序</button></div>
 <div class="prow" style="padding-top:15px"><label class="lb" for="hd" style="width:62px">表头区域</label><select id="hd" class="combo flex-fill"><option>无</option></select></div>
 <div class="prow" style="padding-top:3px"><span class="lb" style="width:62px">表头设置</span><label class="d-flex align-items-center" style="gap:4px"><input class="tick" type="checkbox">允许用户点击排列顺序</label></div>
</aside>
</div>
</div>
<div class="desk"></div>
</div>
<footer class="taskbar"><i></i></footer>
<button class="floatbox" aria-label="文件夹"><svg width="14" height="12" viewBox="0 0 14 12" fill="currentColor"><path d="M0 1h5l1 1h5v2H3L1 10zM4 5h10l-2 7H2z"/></svg></button>

<section class="dlg" role="dialog" aria-label="数据列">
 <div class="dh d-flex align-items-center justify-content-between">数据列<button aria-label="关闭"><svg class="i14"><use href="#x"/></svg></button></div>
 <div class="dlgtabs d-flex"><button>基本</button><button class="on"><span>过滤</span></button><button>高级</button></div>
 <div class="pane">
  <fieldset class="fs" style="height:43px"><legend>父格条件</legend>
   <label class="d-flex align-items-center" style="gap:4px;margin:3px 0 0 39px"><input class="tick" type="checkbox" checked><span>将父格子作为过滤条件 (适用于父子格来自于同一个数据集)</span></label></fieldset>
  <fieldset class="fs" style="margin-top:10px;padding-bottom:4px"><legend>普通条件</legend>
   <div class="d-flex align-items-center" style="height:28px;padding-bottom:2px"><span style="width:170px">类型:</span><label class="d-flex align-items-center" style="gap:4px;width:320px"><input class="rad" type="radio" name="t" checked>普通</label><label class="d-flex align-items-center" style="gap:4px"><input class="rad" type="radio" name="t">公式</label></div>
   <div class="rule d-flex" style="height:24px"><label for="c1" style="width:181px">可选列:</label><label for="c2">操作符:</label></div>
   <div class="d-flex align-items-center">
    <button class="me-1" style="width:18px" aria-label="类型"><svg width="18" height="20" viewBox="0 0 18 20" fill="none" stroke="#222"><path d="M2 7l5-5h6v6H8M4 8l5-5M3 8h4l4-4" stroke-width="1.200"/><path d="M14 16h4l-2 3z" fill="#222" stroke="none"/><text x="0" y="17" font-size="7" font-weight="bold" fill="#222" stroke="none" font-family="Liberation Sans">ABC</text></svg></button>
    <select id="c1" class="combo lat" style="width:153px;padding-left:1px"><option>arch_comp</option></select>
    <select id="c2" class="combo" style="width:85px;margin-left:6px;padding-left:0"><option>等于</option></select>
    <svg class="i16" style="margin:0 3px 0 8px"><use href="#cells"/></svg>
    <div class="spin flex-fill"><input value="A" aria-label="列"><span><button aria-label="增"><svg width="8" height="8"><use href="#up"/></svg></button><button aria-label="减"><svg width="8" height="8"><use href="#dn"/></svg></button></span></div>
    <div class="spin flex-fill" style="margin-left:5px;margin-right:2px"><input value="2" aria-label="行"><span><button aria-label="增"><svg width="8" height="8"><use href="#up"/></svg></button><button aria-label="减"><svg width="8" height="8"><use href="#dn"/></svg></button></span></div>
   </div>
   <div class="rule d-flex align-items-center justify-content-end" style="margin-top:1px;padding:16px 1px 6px 0">
    <label class="d-flex align-items-center" style="gap:4px;margin-right:15px"><input class="rad" type="radio" name="j" checked><span>与<span class="lat"> (AND)</span></span></label>
    <label class="d-flex align-items-center" style="gap:4px;margin-right:61px"><input class="rad" type="radio" name="j"><span>或<span class="lat"> (OR)</span></span></label>
    <button class="wbtn" style="width:50px;margin-right:14px"><svg class="i14"><use href="#plus"/></svg>增加</button>
    <button class="wbtn" style="width:50px;gap:3px"><svg class="i16" viewBox="0 0 16 16" fill="none"><path d="M8 2h7v13H2V11" stroke="#2b78b5" stroke-width="1.500"/><circle cx="5.500" cy="5.500" r="3.500" stroke="#27b050" stroke-width="2" stroke-dasharray="1.600 .6"/><circle cx="5.500" cy="5.500" r="2" stroke="#27b050"/><circle cx="12" cy="12.500" r="1.500" stroke="#2b78b5"/></svg>修改</button>
   </div>
   <div class="d-flex" style="padding:0 1px 0 2px">
    <div class="conds flex-fill"><div class="d-flex align-items-center"><i style="width:9px;height:1px;background:#ddd"></i><span class="pick">(列名<span class="lat">:arch_comp)</span> 等于 <span class="lat">'A2'</span></span></div></div>
    <div class="side"><button class="wbtn"><svg class="i14" viewBox="0 0 16 16"><path d="M2 1l12 14M14 1L2 15" stroke="#e8392f" stroke-width="2"/></svg>删除</button>
     <button class="wbtn" disabled style="gap:6px"><svg width="10" height="14" viewBox="0 0 10 14"><path d="M5 0l4.500 6H6v8H4V6H.5z" fill="#888"/></svg>上移</button>
     <button class="wbtn" disabled style="gap:6px"><svg width="10" height="14" viewBox="0 0 10 14"><path d="M5 14l4.500-6H6V0H4v8H.5z" fill="#888"/></svg>下移</button>
     <button class="wbtn" disabled><svg width="14" height="12" viewBox="0 0 14 12" fill="none" stroke="#777" stroke-width="1.400"><path d="M5 1Q0 6 5 11M9 1q5 5 0 10"/></svg>添加括号</button>
     <button class="wbtn" disabled><svg width="14" height="14" viewBox="0 0 14 14" fill="none" stroke="#777" stroke-width="1.400"><path d="M7 4q-4 4.500 0 9M10 4q4 4.500 0 9M0 1l8 6M7 1L0 6M4 0v9"/></svg>去掉括号</button></div>
   </div>
  </fieldset>
 </div>
 <div class="d-flex justify-content-end" style="padding:6px 13px 3px;gap:10px"><button class="wbtn" style="width:44px">确定</button><button class="wbtn" style="width:44px">取消</button></div>
</section>
<svg class="redarrow" width="282" height="262" viewBox="0 0 282 262"><path d="M4 256L262 12 259 9 277 3 271 20 267 17 5 258z" fill="#fb3b38"/></svg>
</body>
</html>
